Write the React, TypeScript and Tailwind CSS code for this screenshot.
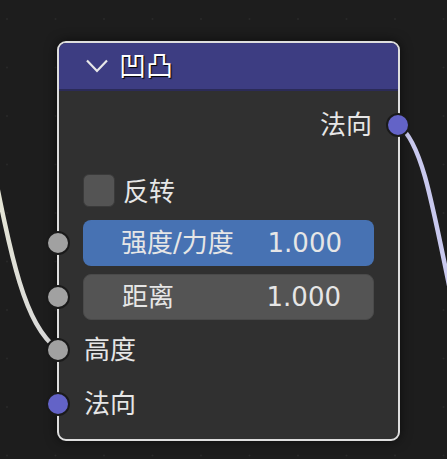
import React from "react";

const font = { fontFamily: '"DejaVu Sans", "Noto Sans CJK SC", sans-serif' };

function Socket({ color, top, left }: { color: string; top: number; left: number }) {
  return (
    <div
      className="absolute w-[24px] h-[24px] rounded-full border-[2.5px] border-[#1a1a1a]"
      style={{ backgroundColor: color, top: top - 12, left: left - 12 }}
    />
  );
}

export default function App() {
  const dots: React.ReactElement[] = [];
  for (let i = 0; i < 10; i++) {
    for (let j = 0; j < 10; j++) {
      dots.push(<circle key={`${i}-${j}`} cx={7 + i * 48.5} cy={19 + j * 48.5} r={1} fill="#2a2a2a" />);
    }
  }
  return (
    <div className="relative w-[447px] h-[459px] overflow-hidden bg-[#1d1d1d]" style={font}>
      <svg className="absolute inset-0" width={447} height={459}>
        {dots}
        <defs>
          <linearGradient id="lw" x1="0" y1="0" x2="0" y2="1">
            <stop offset="0" stopColor="#ececd2" />
            <stop offset="1" stopColor="#dadada" />
          </linearGradient>
        </defs>
        <path d="M -20 100 C 10 250, 20 320, 58 350" stroke="url(#lw)" strokeWidth={4.5} fill="none" />
        <path d="M 398 125 C 420 140, 430 190, 452 300" stroke="#c9c9ee" strokeWidth={4.5} fill="none" />
      </svg>

      <div className="absolute left-[57px] top-[41px] w-[343px] h-[400px] rounded-[9px] border-2 border-[#dedede] bg-[#303030] shadow-[0_0_12px_rgba(0,0,0,0.6)] flex flex-col text-[#e6e6e6] text-[26px] leading-none">
        <div className="h-[48px] shrink-0 rounded-t-[7px] bg-[#3d3d82] border-b-2 border-[#2b2b58] flex items-center pl-[27px]">
          <svg width={22} height={14} viewBox="0 0 22 14" className="mr-[11px]">
            <polyline points="1,1.5 11,12 21,1.5" stroke="#e8e8e8" strokeWidth={2.2} fill="none" />
          </svg>
          <span className="text-white text-[27px] [text-shadow:1px_1px_1px_#000]">凹凸</span>
        </div>
        <div className="flex flex-col">
          <div className="h-[34px] mt-[17px] flex items-center justify-end pr-[26px]">法向</div>
          <div className="h-[33px] mt-[32px] flex items-center pl-[24px] gap-[8px]">
            <div className="w-[32px] h-[33px] rounded-[6px] bg-[#545454] border border-[#3a3a3a]" />
            <span className="mt-[3px]">反转</span>
          </div>
          <div className="mx-[24px] mt-[13px] h-[46px] rounded-[8px] bg-[#4772b3] flex items-center justify-between pl-[38px] pr-[32px]">
            <span>强度/力度</span>
            <span>1.000</span>
          </div>
          <div className="mx-[24px] mt-[8px] h-[46px] rounded-[8px] bg-[#545454] border border-[#4a4a4a] flex items-center justify-between pl-[38px] pr-[32px]">
            <span>距离</span>
            <span>1.000</span>
          </div>
          <div className="h-[34px] mt-[13px] flex items-center pl-[25px]">高度</div>
          <div className="h-[34px] mt-[20px] flex items-center pl-[25px]">法向</div>
        </div>
      </div>

      <Socket color="#6363c7" top={125} left={398} />
      <Socket color="#a1a1a1" top={243} left={58} />
      <Socket color="#a1a1a1" top={297} left={58} />
      <Socket color="#a1a1a1" top={350} left={58} />
      <Socket color="#6363c7" top={404} left={58} />
    </div>
  );
}
